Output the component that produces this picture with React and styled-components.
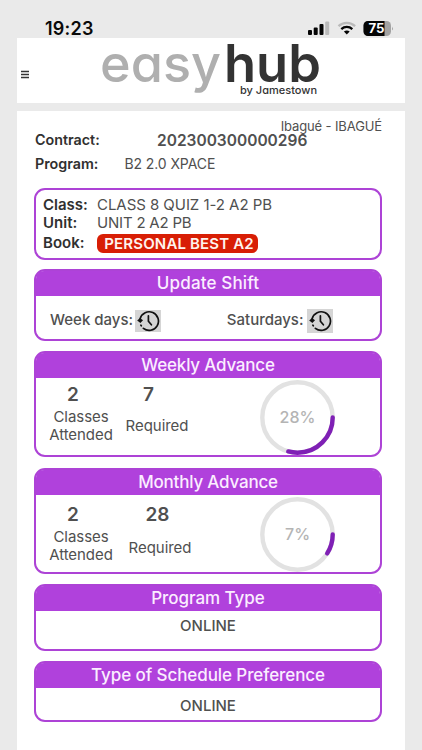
import React from "react";
import styled, { createGlobalStyle } from "styled-components";

const GlobalStyle = createGlobalStyle`
  * {
    box-sizing: border-box;
  }

  body {
    margin: 0;
    background: #eaeaea;
    color: #505050;
    font-family: Inter, "Liberation Sans", sans-serif;
    overflow: hidden;
  }
`;

const Screen = styled.div`
  width: 422px;
  height: 750px;
  overflow: hidden;
  display: flex;
  flex-direction: column;
  background: #eaeaea;
`;

const StatusBar = styled.div`
  height: 38px;
  padding: 19px 28px 0 45px;
  display: flex;
  justify-content: space-between;
  align-items: flex-start;
`;

const Time = styled.span`
  font-size: 18px;
  line-height: 19px;
  font-weight: 600;
  letter-spacing: 0.2px;
  color: #0a0a0a;
`;

const StatusIcons = styled.svg`
  width: 86px;
  height: 19px;
  display: block;
`;

const Header = styled.header`
  height: 65px;
  margin: 0 17px 8px;
  padding-left: 4px;
  background: #fff;
  display: flex;
  align-items: center;
`;

const MenuButton = styled.button`
  width: 8px;
  height: 9px;
  margin-top: 8px;
  padding: 0;
  border: 0;
  background: none;
  display: flex;

  svg {
    width: 8px;
    height: 9px;
  }
`;

const Logo = styled.svg`
  width: 224px;
  height: 65px;
  margin-left: 71px;
  overflow: visible;
  font-feature-settings: "cv11";
`;

const Main = styled.main`
  flex: 1;
  margin: 0 17px;
  padding: 7px 23px 0 17px;
  background: #fff;
`;

const Label = styled.span`
  width: ${props => props.$width};
  margin-top: ${props => props.$lift || "0"};
  font-size: ${props => props.$size || "15px"};
  font-weight: 600;
  color: #303030;
`;

const Value = styled.span`
  font-size: ${props => props.$size || "15px"};
  font-weight: ${props => (props.$bold ? 600 : 400)};
  letter-spacing: ${props => props.$spacing || "0"};
`;

const Location = styled.div`
  height: 16px;
  line-height: 16px;
  font-size: 13px;
  text-align: right;
  letter-spacing: -0.12px;
`;

const InfoRow = styled.div`
  height: 14px;
  line-height: 14px;
  margin: ${props => props.$margin || "0"};
  padding-left: 1px;
  display: flex;
  align-items: center;
  white-space: nowrap;
`;

const Card = styled.section`
  width: 348px;
  height: ${props => props.$height}px;
  margin-bottom: ${props => props.$gap || 0}px;
  border: 2px solid #ad43d6;
  border-radius: 11px;
  background: #fff;
`;

const CardTitle = styled.h2`
  height: 25px;
  margin: 0;
  border-radius: 8px 8px 0 0;
  background: #b041dc;
  color: #fbeeff;
  font-size: 17px;
  font-weight: 550;
  line-height: 24px;
  letter-spacing: ${props => props.$spacing || "0"};
  text-align: center;
`;

const ClassRow = styled.div`
  height: ${props => props.$height}px;
  padding-left: 7px;
  display: flex;
  align-items: center;
  white-space: nowrap;
`;

const Badge = styled.span`
  width: 161px;
  height: 19px;
  padding-left: 3px;
  border-radius: 6px;
  background: #d81e05;
  color: #fff3ee;
  font-size: 15px;
  font-weight: 600;
  line-height: 19px;
  letter-spacing: 0.15px;
  text-align: center;
`;

const ShiftRow = styled.div`
  height: 50px;
  padding: 0 47px 0 14px;
  display: flex;
  justify-content: space-between;
  align-items: center;
`;

const Shift = styled.div`
  display: flex;
  align-items: center;
  gap: ${props => props.$gap}px;
  font-size: 15px;
  font-weight: 500;
  line-height: 18px;

  span {
    margin-top: -2px;
  }
`;

const ShiftButton = styled.button`
  width: 26px;
  height: ${props => props.$height}px;
  padding: 0;
  border: 0;
  background: #d5d5d5;
  display: flex;
  align-items: center;
  justify-content: center;
`;

const Stats = styled.div`
  display: flex;
  align-items: flex-start;
  padding: 0 45px 0 5px;
`;

const Stat = styled.div`
  width: ${props => props.$width}px;
  padding-top: ${props => props.$top}px;
  text-align: center;
`;

const StatNumber = styled.div`
  height: 20px;
  line-height: 20px;
  padding-right: ${props => props.$shift}px;
  font-size: 19px;
  font-weight: 600;
`;

const StatLabel = styled.div`
  margin-top: ${props => props.$gap}px;
  font-size: 15px;
  line-height: 18px;
  letter-spacing: -0.05px;
`;

const Ring = styled.svg`
  width: 75px;
  height: 75px;
  margin: 2px 0 0 auto;
`;

const PlainText = styled.div`
  padding-top: ${props => props.$top}px;
  font-size: 15px;
  font-weight: 500;
  line-height: 18px;
  text-align: center;
`;

const PhoneStatus = () => (
  <StatusIcons viewBox="0 0 86 19">
    <rect x="0" y="11" width="4" height="5" rx="1" fill="#050505" />
    <rect x="5.7" y="8.5" width="4" height="7.5" rx="1" fill="#050505" />
    <rect x="11.5" y="5" width="4" height="11" rx="1" fill="#050505" />
    <rect x="17.2" y="2.5" width="4" height="13.5" rx="1" fill="#bababa" />
    <g fill="none" strokeWidth="2.3">
      <path d="M30.5 7.2C35.2 2.7 42.4 2.7 47.1 7.2" stroke="#bababa" />
      <path d="M33.3 10.1C36.5 7.2 41.1 7.2 44.3 10.1" stroke="#050505" />
    </g>
    <path d="M35.9 12.5Q38.8 10.3 41.7 12.5L38.8 15.5Z" fill="#050505" />
    <rect x="55.5" y="2" width="27.5" height="15" rx="4.5" fill="#a3a3a3" />
    <path d="M60 2H76.5V17H60A4.5 4.5 0 0 1 55.5 12.5V6.5A4.5 4.5 0 0 1 60 2Z" fill="#050505" />
    <path d="M84 7.5Q85.8 9.5 84 11.5Z" fill="#a3a3a3" />
    <text x="60.5" y="14" fill="#fff" fontSize="12.5" fontWeight="700" textLength="16" lengthAdjust="spacingAndGlyphs">75</text>
  </StatusIcons>
);

const MenuIcon = () => (
  <svg viewBox="0 0 8 9">
    <path d="M0 1.5H8M0 4.5H8M0 7.5H8" stroke="#333" strokeWidth="1.3" />
  </svg>
);

const EasyhubLogo = () => (
  <Logo viewBox="0 0 224 65">
    <text x="0" y="44" fill="#afafaf" fontSize="52" fontWeight="450" textLength="121" lengthAdjust="spacingAndGlyphs">easy</text>
    <text x="124" y="44" fill="#333" fontSize="52" fontWeight="600" textLength="97" lengthAdjust="spacingAndGlyphs">hub</text>
    <text x="140" y="56" fill="#333" fontSize="11" fontWeight="450" textLength="77" lengthAdjust="spacingAndGlyphs">by Jamestown</text>
  </Logo>
);

const HistoryIcon = () => (
  <svg width="26" height="22" viewBox="0 0 26 22">
    <g fill="none" stroke="#111" strokeWidth="1.7" strokeLinecap="round">
      <path d="M5.2 8.6A9.3 9.3 0 1 1 8.4 18.4" />
      <path d="M5.9 15.2L6.3 15.8" />
      <path d="M13.4 5.8V11.2L16.4 14.8" />
    </g>
    <path d="M2.2 10.4L5 8L8 10.2L5.4 13Z" fill="#111" />
  </svg>
);

const Progress = ({ value, arc }) => {
  const length = 2 * Math.PI * 35.2;
  return (
    <Ring viewBox="0 0 75 75">
      <circle cx="37.5" cy="37.5" r="35.2" fill="none" stroke="#e2e2e2" strokeWidth="4.4" />
      <circle
        cx="37.5"
        cy="37.5"
        r="35.2"
        fill="none"
        stroke="#7f20b5"
        strokeWidth="4.4"
        strokeLinecap="round"
        strokeDasharray={`${(length * arc) / 100} ${length}`}
      />
      <text x="37.5" y="43.4" fill="#b4b4b4" fontSize="16" fontWeight="500" textAnchor="middle">{value}%</text>
    </Ring>
  );
};

const App = () => (
  <>
    <GlobalStyle />
    <Screen>
      <StatusBar>
        <Time>19:23</Time>
        <PhoneStatus />
      </StatusBar>
      <Header>
        <MenuButton aria-label="Menu">
          <MenuIcon />
        </MenuButton>
        <EasyhubLogo />
      </Header>
      <Main>
        <Location>Ibagué - IBAGUÉ</Location>
        <InfoRow $margin="0 0 9px">
          <Label $width="122px" $size="14.3px" $lift="-2px">Contract:</Label>
          <Value $bold $size="15.5px">202300300000296</Value>
        </InfoRow>
        <InfoRow $margin="0 0 17px">
          <Label $width="89.5px" $size="14.3px">Program:</Label>
          <Value $size="14px" $spacing="-0.1px">B2 2.0 XPACE</Value>
        </InfoRow>
        <Card $height={72} $gap={9}>
          <ClassRow $height={28}>
            <Label $width="54px">Class:</Label>
            <Value $spacing="-0.05px">CLASS 8 QUIZ 1-2 A2 PB</Value>
          </ClassRow>
          <ClassRow $height={9}>
            <Label $width="54px">Unit:</Label>
            <Value $spacing="-0.2px">UNIT 2 A2 PB</Value>
          </ClassRow>
          <ClassRow $height={33}>
            <Label $width="54px" $lift="-2px">Book:</Label>
            <Badge>PERSONAL BEST A2</Badge>
          </ClassRow>
        </Card>
        <Card $height={72} $gap={10}>
          <CardTitle $spacing="0.15px">Update Shift</CardTitle>
          <ShiftRow>
            <Shift $gap={2}>
              <span>Week days:</span>
              <ShiftButton $height={22}><HistoryIcon /></ShiftButton>
            </Shift>
            <Shift $gap={3.5}>
              <span>Saturdays:</span>
              <ShiftButton $height={24}><HistoryIcon /></ShiftButton>
            </Shift>
          </ShiftRow>
        </Card>
        <Card $height={106} $gap={11}>
          <CardTitle $spacing="-0.2px">Weekly Advance</CardTitle>
          <Stats>
            <Stat $width={80} $top={7}>
              <StatNumber $shift={16}>2</StatNumber>
              <StatLabel $gap={3}>Classes<br />Attended</StatLabel>
            </Stat>
            <Stat $width={72} $top={7}>
              <StatNumber $shift={17}>7</StatNumber>
              <StatLabel $gap={12}>Required</StatLabel>
            </Stat>
            <Progress value={28} arc={29.2} />
          </Stats>
        </Card>
        <Card $height={106} $gap={10}>
          <CardTitle $spacing="-0.2px">Monthly Advance</CardTitle>
          <Stats>
            <Stat $width={80} $top={10}>
              <StatNumber $shift={16}>2</StatNumber>
              <StatLabel $gap={3}>Classes<br />Attended</StatLabel>
            </Stat>
            <Stat $width={78} $top={10}>
              <StatNumber $shift={5}>28</StatNumber>
              <StatLabel $gap={14}>Required</StatLabel>
            </Stat>
            <Progress value={7} arc={9} />
          </Stats>
        </Card>
        <Card $height={67} $gap={10}>
          <CardTitle $spacing="-0.05px">Program Type</CardTitle>
          <PlainText $top={6}>ONLINE</PlainText>
        </Card>
        <Card $height={61}>
          <CardTitle $spacing="-0.08px">Type of Schedule Preference</CardTitle>
          <PlainText $top={9}>ONLINE</PlainText>
        </Card>
      </Main>
    </Screen>
  </>
);

export default App;
